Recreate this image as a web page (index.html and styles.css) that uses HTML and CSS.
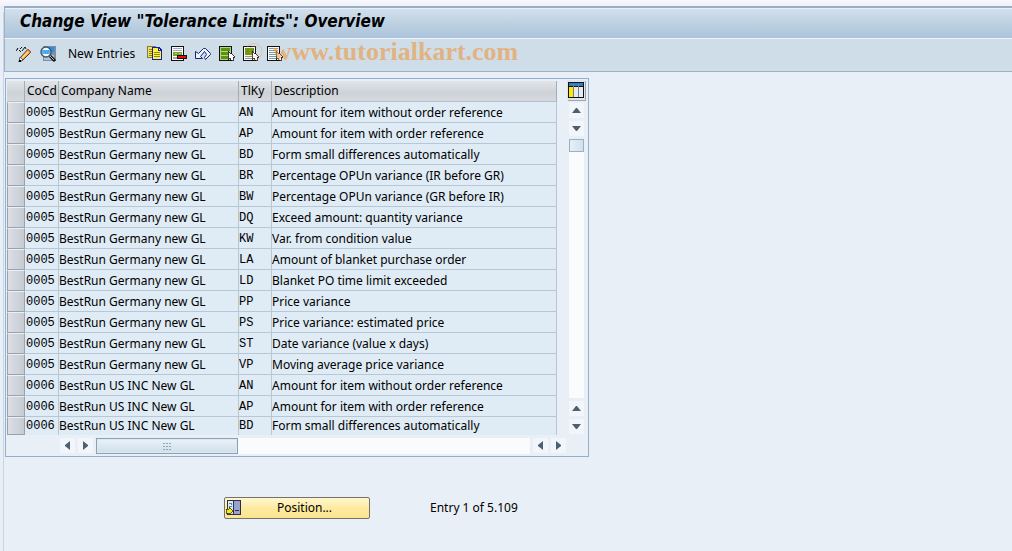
FILE: index.html
```html
<!DOCTYPE html>
<html lang="en">
<head>
<meta charset="utf-8">
<title>Change View "Tolerance Limits": Overview</title>
<link rel="stylesheet" href="styles.css">
</head>
<body>
<main class="window">
  <header class="titlebar"><h1 class="title">Change View "Tolerance Limits": Overview</h1></header>
  <div class="toolbar" role="toolbar" aria-label="Application toolbar">
    <button class="tool" aria-label="Display/Change"><svg class="icon" viewBox="0 0 16 16"><path d="M0 5l2-3M1 3h1M3 4l2 2M4 3l2-2M6 5l3-4M9 1l1 2" fill="none" stroke="#111"/><path d="M4 12L12 3l3 3-8 8-4 2z" fill="#f7a032" stroke="#222" stroke-width=".8"/><path d="M6 12l7-7" stroke="#ffe08a" stroke-width="1.4"/><path d="M12 3l3 3-1 1-3-3z" fill="#ef6b4c"/><path d="M4 11l3 3-4 2z" fill="#fff" stroke="#222" stroke-width=".6"/><path d="M3 14h2v2H3z" fill="#000"/></svg></button>
    <button class="tool" aria-label="Details"><svg class="icon" viewBox="0 0 16 16"><path d="M3 0h13v15H3z" fill="#7d8ea3"/><path d="M4 1h10v5H4z" fill="#2490e5"/><path d="M4 9h10v5H4z" fill="#adc4d9"/><circle cx="6" cy="6" r="5" fill="#eef8ff" stroke="#42566b" stroke-width="1.4"/><path d="M2 4h8v4H2z" fill="#55b3f5"/><path d="M4 5h1M6 5h1M8 5h1M5 7h1M7 7h1" stroke="#2f8be0"/><path d="M10 10l5 5" stroke="#111" stroke-width="3"/><path d="M10 10l4 4" stroke="#b6bec8"/></svg></button>
    <button class="tool text-tool">New Entries</button>
    <button class="tool" aria-label="Copy as"><svg class="icon crisp" viewBox="0 0 16 16"><path d="M0 0h9v12H0z" fill="#7c7a48"/><path d="M1 1h7v10H1z" fill="#f4e54d"/><path d="M2 3h4v1H2zM2 5h3v1H2zM2 7h3v1H2zM2 9h3v1H2z" fill="#867e35"/><path d="M5 1h7l3 3v10H5z" fill="#171ab4"/><path d="M6 2h5v3h3v8H6z" fill="#fff32d"/><path d="M12 3l1 1h-1z" fill="#fff"/><path d="M7 6h6v1H7zM7 8h6v1H7zM7 10h6v1H7z" fill="#8b8422"/></svg></button>
    <button class="tool" aria-label="Delete"><svg class="icon crisp" viewBox="0 0 16 16"><path d="M0 0h13v15H0z" fill="#111"/><path d="M1 1h11v13H1z" fill="#fff"/><path d="M2 2h9v1H2zM2 4h9v1H2zM2 11h7v2H2z" fill="#a7a6bd"/><path d="M2 6h9v4H2z" fill="#72a82b"/><path d="M4 7h2v1H4zM8 7h2v1H8z" fill="#b6d776"/><path d="M6 9h10v4H6z" fill="#111"/><path d="M7 10h8v2H7z" fill="#f20b0b"/></svg></button>
    <button class="tool" aria-label="Undo"><svg class="icon" viewBox="0 0 16 16"><path d="M.5 5.500v7h7l-2-2 4-5 2 3-2 3 1 2 5-5v-1l-5-5h-2l-5 5z" fill="#edf5fc" stroke="#18207d"/></svg></button>
    <button class="tool" aria-label="Select all"><svg class="icon crisp" viewBox="0 0 16 16"><path d="M0 0h13v15H0z" fill="#111"/><path d="M1 1h11v13H1z" fill="#b8d482"/><path d="M2 2h9v3H2zM2 6h9v3H2zM2 10h9v3H2z" fill="#599511"/><path d="M9 5v9l2-2 2 3 2-1-1-3h2z" fill="#fff" stroke="#111" stroke-width=".8"/></svg></button>
    <button class="tool" aria-label="Select block"><svg class="icon crisp" viewBox="0 0 16 16"><path d="M0 0h13v15H0z" fill="#111"/><path d="M1 1h11v13H1z" fill="#fff"/><path d="M2 2h9v7H2z" fill="#659613"/><path d="M2 10h9v1H2zM2 12h9v1H2z" fill="#7898aa"/><path d="M9 5v9l2-2 2 3 2-1-1-3h2z" fill="#fff" stroke="#111" stroke-width=".8"/></svg></button>
    <button class="tool" aria-label="Deselect all"><svg class="icon crisp" viewBox="0 0 16 16"><path d="M0 0h13v15H0z" fill="#111"/><path d="M1 1h11v13H1z" fill="#fff"/><path d="M2 2h9v1H2zM2 4h9v1H2zM2 6h9v1H2zM2 8h9v1H2zM2 10h9v1H2zM2 12h9v1H2z" fill="#7898aa"/><path d="M9 5v9l2-2 2 3 2-1-1-3h2z" fill="#fff" stroke="#111" stroke-width=".8"/></svg></button>
    <span class="watermark"><span class="copyright">©</span>www.tutorialkart.com</span>
  </div>

  <section class="panel" aria-label="Tolerance limits">
    <div class="grid-area">
      <table class="grid">
        <colgroup><col class="c-sel"><col class="c-code"><col class="c-name"><col class="c-key"><col class="c-desc"></colgroup>
        <thead><tr><th></th><th>CoCd</th><th>Company Name</th><th>TlKy</th><th>Description</th></tr></thead>
        <tbody>
          <tr><td><button class="sel" aria-label="Select row"></button></td><td>0005</td><td>BestRun Germany new GL</td><td>AN</td><td>Amount for item without order reference</td></tr>
          <tr><td><button class="sel" aria-label="Select row"></button></td><td>0005</td><td>BestRun Germany new GL</td><td>AP</td><td>Amount for item with order reference</td></tr>
          <tr><td><button class="sel" aria-label="Select row"></button></td><td>0005</td><td>BestRun Germany new GL</td><td>BD</td><td>Form small differences automatically</td></tr>
          <tr><td><button class="sel" aria-label="Select row"></button></td><td>0005</td><td>BestRun Germany new GL</td><td>BR</td><td>Percentage OPUn variance (IR before GR)</td></tr>
          <tr><td><button class="sel" aria-label="Select row"></button></td><td>0005</td><td>BestRun Germany new GL</td><td>BW</td><td>Percentage OPUn variance (GR before IR)</td></tr>
          <tr><td><button class="sel" aria-label="Select row"></button></td><td>0005</td><td>BestRun Germany new GL</td><td>DQ</td><td>Exceed amount: quantity variance</td></tr>
          <tr><td><button class="sel" aria-label="Select row"></button></td><td>0005</td><td>BestRun Germany new GL</td><td>KW</td><td>Var. from condition value</td></tr>
          <tr><td><button class="sel" aria-label="Select row"></button></td><td>0005</td><td>BestRun Germany new GL</td><td>LA</td><td>Amount of blanket purchase order</td></tr>
          <tr><td><button class="sel" aria-label="Select row"></button></td><td>0005</td><td>BestRun Germany new GL</td><td>LD</td><td>Blanket PO time limit exceeded</td></tr>
          <tr><td><button class="sel" aria-label="Select row"></button></td><td>0005</td><td>BestRun Germany new GL</td><td>PP</td><td>Price variance</td></tr>
          <tr><td><button class="sel" aria-label="Select row"></button></td><td>0005</td><td>BestRun Germany new GL</td><td>PS</td><td>Price variance: estimated price</td></tr>
          <tr><td><button class="sel" aria-label="Select row"></button></td><td>0005</td><td>BestRun Germany new GL</td><td>ST</td><td>Date variance (value x days)</td></tr>
          <tr><td><button class="sel" aria-label="Select row"></button></td><td>0005</td><td>BestRun Germany new GL</td><td>VP</td><td>Moving average price variance</td></tr>
          <tr><td><button class="sel" aria-label="Select row"></button></td><td>0006</td><td>BestRun US INC New GL</td><td>AN</td><td>Amount for item without order reference</td></tr>
          <tr><td><button class="sel" aria-label="Select row"></button></td><td>0006</td><td>BestRun US INC New GL</td><td>AP</td><td>Amount for item with order reference</td></tr>
          <tr class="last"><td><button class="sel" aria-label="Select row"></button></td><td>0006</td><td>BestRun US INC New GL</td><td>BD</td><td>Form small differences automatically</td></tr>
        </tbody>
      </table>
      <div class="vscroll">
        <button class="config" aria-label="Table settings"><svg class="icon crisp" viewBox="0 0 16 16"><path d="M0 0h16v16H0z" fill="#111"/><path d="M1 1h14v3H1z" fill="#2f7fc1"/><path d="M1 5h4v10H1z" fill="#ffe900"/><path d="M6 5h4v10H6zM11 5h4v10h-4z" fill="#e6ebf0"/><path d="M5 2h1v13H5zM10 2h1v13h-1z" fill="#6b7f92"/></svg></button>
        <button class="arrow" aria-label="Scroll up"><svg viewBox="0 0 9 5" class="v"><path d="M0 5L4 0h1l4 5z"/></svg></button>
        <button class="arrow" aria-label="Page up"><svg viewBox="0 0 9 5" class="v"><path d="M0 0h9L5 5H4z"/></svg></button>
        <div class="vtrack"><div class="vthumb"></div></div>
        <button class="arrow" aria-label="Page down"><svg viewBox="0 0 9 5" class="v"><path d="M0 5L4 0h1l4 5z"/></svg></button>
        <button class="arrow" aria-label="Scroll down"><svg viewBox="0 0 9 5" class="v"><path d="M0 0h9L5 5H4z"/></svg></button>
      </div>
    </div>
    <div class="hscroll">
      <button class="arrow" aria-label="Scroll left"><svg viewBox="0 0 5 9" class="h"><path d="M5 0v9L0 5V4z"/></svg></button>
      <button class="arrow" aria-label="Page left"><svg viewBox="0 0 5 9" class="h"><path d="M0 0v9l5-4V4z"/></svg></button>
      <div class="htrack"><div class="hthumb"><svg class="grip" viewBox="0 0 8 7"><path d="M0 0h2v1H0zM3 0h2v1H3zM6 0h2v1H6zM0 3h2v1H0zM3 3h2v1H3zM6 3h2v1H6zM0 6h2v1H0zM3 6h2v1H3zM6 6h2v1H6z"/></svg></div></div>
      <button class="arrow" aria-label="Page right"><svg viewBox="0 0 5 9" class="h"><path d="M5 0v9L0 5V4z"/></svg></button>
      <button class="arrow" aria-label="Scroll right"><svg viewBox="0 0 5 9" class="h"><path d="M0 0v9l5-4V4z"/></svg></button>
    </div>
  </section>

  <footer class="foot">
    <button class="position"><svg class="icon crisp" viewBox="0 0 16 16"><path d="M1 0h14v15H1z" fill="#26304a"/><path d="M2 1h5v13H2z" fill="#dfe9f5"/><path d="M8 1h6v13H8z" fill="#9aa3cf"/><path d="M9 10h4v1H9z" fill="#26304a"/><path d="M3 3h3v1H3zM5 4h1v1H5zM3 6h3v1H3z" fill="#5b8896"/><path d="M0 9h3V7l4 4-4 4v-2H0z" fill="#ffe800" stroke="#333" stroke-width=".8"/></svg><span class="position-label">Position...</span></button>
    <span class="entry">Entry 1 of 5.109</span>
  </footer>
</main>
</body>
</html>
```
FILE: styles.css
```css
* { box-sizing: border-box; }
body {
  margin: 0;
  background: #e8eff6;
  color: #000;
  font: 12px/16px "Noto Sans", Tahoma, sans-serif;
}
button {
  margin: 0;
  padding: 0;
  border: 0;
  background: none;
  color: inherit;
  font: inherit;
}
svg { display: block; flex: none; }
.icon { width: 16px; height: 16px; }
.crisp { shape-rendering: crispEdges; }

.window {
  min-height: 100vh;
  padding-top: 6px;
  background: linear-gradient(#f6f8fc, #edf2f9 6px, #e8eff6 6px);
}
.window::before {
  content: "";
  position: absolute;
  left: 3px;
  top: 12px;
  bottom: 0;
  width: 1px;
  background: #c9d5e3;
}
.titlebar {
  height: 33px;
  margin-left: 4px;
  padding: 4px 15px 0;
  border-top: 2px solid #9dacc3;
  border-bottom: 1px solid #f0f5f9;
  border-left: 1px solid #9db2c8;
  background: linear-gradient(#d3e1ee, #bed1e1 50%, #abc3db);
  box-shadow: inset 0 1px #e9f1f8;
}
.title {
  margin: 0;
  font-family: "DejaVu Sans Condensed", Tahoma, sans-serif;
  font-size: 17px;
  line-height: 18px;
  font-weight: bold;
  font-style: italic;
}
.toolbar {
  position: relative;
  display: flex;
  align-items: center;
  gap: 8px;
  height: 33px;
  margin-left: 4px;
  padding: 0 0 2px 11px;
  border-bottom: 1px solid #9fb2c5;
  border-left: 1px solid #9db2c8;
  background: #cfdde8;
}
.text-tool { margin: 0 4px; }
.watermark {
  position: absolute;
  left: 239px;
  top: 0;
  display: flex;
  gap: 9px;
  font: bold 26px/26px "Liberation Serif", serif;
  color: #f0983f;
  opacity: .6;
  pointer-events: none;
}
.copyright { font-weight: normal; opacity: .5; }

.panel {
  width: 584px;
  max-width: calc(100% - 5px);
  margin: 6px 0 0 5px;
  padding: 1px 3px 2px 1px;
  border: 1px solid #93afcb;
}
.grid-area { display: flex; justify-content: space-between; }
.grid {
  width: 550px;
  margin-top: 1px;
  table-layout: fixed;
  border-collapse: separate;
  border-spacing: 0;
}
.c-sel { width: 18px; }
.c-code { width: 34px; }
.c-name { width: 180px; }
.c-key { width: 33px; }
.grid th {
  height: 21px;
  padding: 0 2px;
  border-right: 1px solid #a3adb7;
  border-bottom: 1px solid #b4c0cc;
  background: linear-gradient(#e2e5e8, #cdd2d8 60%, #d6dade);
  font-weight: normal;
  text-align: left;
  white-space: nowrap;
}
.grid td {
  height: 21px;
  padding: 2px 0 0;
  border-right: 1px solid #b9c7d5;
  border-bottom: 1px solid #b9c7d5;
  background: #dfebf5;
  white-space: nowrap;
}
.grid td:first-child { padding: 0; border: 0; }
.grid td:nth-child(2), .grid td:nth-child(4) {
  font-family: "Liberation Mono", monospace;
}
.grid td:nth-child(2) { padding-left: 1px; }
.grid .last td { height: 18px; padding-top: 0; border-bottom: 0; }
.sel {
  display: block;
  width: 18px;
  height: 21px;
  border: 1px solid #98a3b0;
  border-top-color: #edf0f3;
  background: linear-gradient(90deg, #dcdfe4, #c6cbd3);
}
.last .sel { height: 18px; }

.vscroll {
  display: flex;
  flex-direction: column;
  align-items: center;
  gap: 3px;
  width: 18px;
  padding-bottom: 1px;
}
.config {
  width: 18px;
  height: 20px;
  padding: 1px;
  background: #dfe5ea;
  box-shadow: 1px 1px #99a5b2;
}
.arrow {
  display: flex;
  align-items: center;
  justify-content: center;
  width: 15px;
  height: 15px;
  background: #f2f6fb;
}
.v { width: 9px; height: 5px; fill: #4d6070; }
.h { width: 5px; height: 9px; fill: #4d6070; }
.vtrack { flex: 1; width: 15px; background: #fafbfc; }
.vthumb {
  height: 13px;
  border: 1px solid #9aafc0;
  background: linear-gradient(90deg, #e8eff6, #d2e0ec);
}
.hscroll {
  display: flex;
  gap: 3px;
  margin: 3px 19px 0 53px;
}
.htrack { flex: 1; background: #fafbfc; }
.hthumb {
  display: flex;
  align-items: center;
  justify-content: center;
  width: 142px;
  height: 16px;
  border: 1px solid #8da1b2;
  background: linear-gradient(#e9f2f9, #cfdfeb);
  box-shadow: inset 0 0 0 1px #dce8f1;
}
.grip { width: 8px; height: 7px; fill: #91a5b8; }

.foot {
  display: flex;
  align-items: center;
  gap: 60px;
  margin: 40px 0 0 224px;
}
.position {
  display: flex;
  align-items: center;
  width: 146px;
  height: 22px;
  padding: 0 2px 0 1px;
  border: 1px solid #75716a;
  border-radius: 2px;
  background: linear-gradient(#fff8cf, #fdeaa0 50%, #fce58e);
}
.position-label { flex: 1; text-align: center; }
.entry { white-space: nowrap; }
```
